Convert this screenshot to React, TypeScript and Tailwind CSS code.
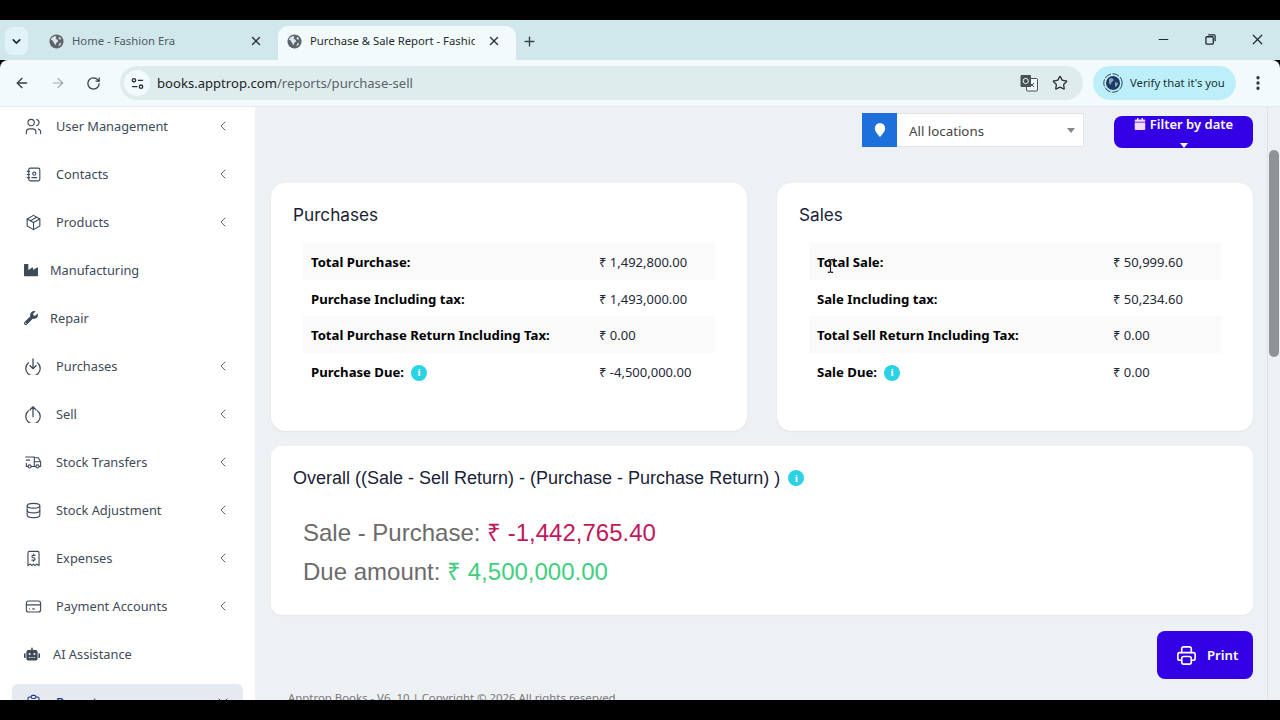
import React from "react";
import { ChevronDown, ChevronLeft, X, Plus, ArrowLeft, ArrowRight, RotateCw, Star, Minus, EllipsisVertical } from "lucide-react";
import { TbUsers, TbAddressBook, TbPackage, TbTruckDelivery, TbDatabase, TbReceipt2, TbCreditCard, TbPrinter, TbClipboardList } from "react-icons/tb";
import { FaIndustry, FaWrench, FaRobot, FaCalendar } from "react-icons/fa";

const ui = "font-['Noto_Sans','Open_Sans',sans-serif]";

function GlobeIcon() {
  return (
    <svg viewBox="0 0 16 16" className="w-[15px] h-[15px] shrink-0">
      <circle cx="8" cy="8" r="7.5" fill="#5f6368" />
      <path d="M3 4l3-2 2 1-1 2 2 1 1 2-2 1-1 3-2-3-1-2-2-1zM11 3l2 2-1 1-2-1zM11 10l2-1-1 3-2 1z" fill="#d5e9ee" />
    </svg>
  );
}

function Tab({ title, active }: { title: string; active?: boolean }) {
  return (
    <div className={`relative w-[238px] h-[34px] flex items-center pl-[9px] pr-[15px] pb-[4px] rounded-t-[10px] ${active ? "bg-[#f2fafc] text-[#1f2a2e]" : "text-[#4f5b60]"}`}>
      <GlobeIcon />
      <span className="ml-[8px] flex-1 overflow-hidden whitespace-nowrap text-[11.3px] mr-[12px]">{title}</span>
      <X size={14} strokeWidth={2.4} className="text-[#2c3438]" />
    </div>
  );
}

function Chrome() {
  return (
    <div className={`${ui} shrink-0`}>
      <div className="h-[40px] bg-[#d0e7ec] flex items-end pl-[5px]">
        <div className="w-[23px] h-[28px] mb-[5px] bg-[#e1f3f8] rounded-[8px] flex items-center justify-center mr-[12px]">
          <ChevronDown size={13} strokeWidth={3} className="text-[#1f2a2e]" />
        </div>
        <Tab title="Home - Fashion Era" />
        <Tab title="Purchase & Sale Report - Fashion Era" active />
        <Plus size={15} strokeWidth={2.2} className="ml-[6px] mb-[11px] text-[#3a4448]" />
        <div className="flex-1" />
        <div className="flex items-center mb-[12px] text-[#1f2a2e]">
          <Minus size={15} strokeWidth={1.6} />
          <svg viewBox="0 0 12 12" className="w-[11px] h-[11px] ml-[34px]" fill="none" stroke="#1f2a2e" strokeWidth="1.4"><rect x="1" y="3" width="8" height="8" rx="1" /><path d="M3.5 1h6.5a1 1 0 0 1 1 1v6" /></svg>
          <X size={17} strokeWidth={1.7} className="ml-[33px] mr-[14px]" />
        </div>
      </div>
      <div className="h-[47px] bg-[#f2fafc] flex items-center rounded-t-[8px] border-b border-[#e3edf0]">
        <ArrowLeft size={16} strokeWidth={2} className="ml-[14px] text-[#353d40]" />
        <ArrowRight size={16} strokeWidth={1.6} className="ml-[20px] text-[#9ba5a8]" />
        <RotateCw size={15} strokeWidth={2} className="ml-[20px] text-[#353d40]" />
        <div className="ml-[19px] w-[963px] h-[34px] rounded-full bg-[#dfeced] flex items-center pl-[4px]">
          <div className="w-[26px] h-[26px] bg-[#f2fafc] rounded-full flex items-center justify-center">
            <svg viewBox="0 0 14 14" className="w-[13px] h-[13px]" fill="none" stroke="#2c3438" strokeWidth="1.5">
              <circle cx="3.2" cy="3.6" r="1.8" /><path d="M7.5 3.6H13M1 10.4h6" /><circle cx="10.8" cy="10.4" r="1.8" />
            </svg>
          </div>
          <span className="ml-[7px] pt-[1px] text-[13.1px] text-[#1c2427]">books.apptrop.com<span className="text-[#5a6568]">/reports/purchase-sell</span></span>
          <div className="flex-1" />
          <svg viewBox="0 0 18 18" className="w-[18px] h-[18px] mr-[14px]">
            <rect x="6.5" y="4.5" width="11" height="12.5" rx="1" fill="#eef5f6" stroke="#4a5256" strokeWidth="1" />
            <rect x="0.5" y="1" width="10.5" height="12" rx="1" fill="#4a5256" />
            <circle cx="5.7" cy="7" r="2.6" fill="none" stroke="#eef5f6" strokeWidth="1" />
            <path d="M10 9l4 4M14 9l-4 4" stroke="#4a5256" strokeWidth="1" />
          </svg>
          <Star size={16} strokeWidth={2} className="text-[#2c3438] mr-[15px]" />
        </div>
        <div className="ml-[10px] w-[143px] h-[34px] rounded-full bg-[#bdeffb] flex items-center pl-[10px]">
          <svg viewBox="0 0 20 20" className="w-[20px] h-[20px] shrink-0">
            <circle cx="10" cy="10" r="9.2" fill="none" stroke="#2c4452" strokeWidth="1" strokeDasharray="7 1.5" />
            <circle cx="10" cy="10" r="7" fill="#1f3a63" />
            <path d="M6 6l3-1 2 2-2 2-2 3-1-2zM12 9l3 1-1 3-2 1z" fill="#8aa4b8" />
          </svg>
          <span className="ml-[7px] text-[11.3px] whitespace-nowrap text-[#1c3138]">Verify that it's you</span>
        </div>
        <EllipsisVertical size={18} strokeWidth={2.4} className="ml-[13px] text-[#2c3438]" />
      </div>
    </div>
  );
}

function ArcArrow({ up }: { up?: boolean }) {
  return (
    <svg viewBox="0 0 20 20" className="w-[18px] h-[18px]" fill="none" stroke="currentColor" strokeWidth="1.4" strokeLinecap="round" strokeLinejoin="round">
      <path d="M5 6.5a8 8 0 1 0 10 0" />
      {up ? <path d="M10 13V2M6.5 5.5L10 2l3.5 3.5" /> : <path d="M10 2v11M6.5 9.5L10 13l3.5-3.5" />}
    </svg>
  );
}

type Item = { label: string; icon: React.ReactNode; chevron?: boolean; w: string };
const tb = { size: 19, strokeWidth: 1.4 };

const items: Item[] = [
  { label: "User Management", icon: <TbUsers {...tb} />, chevron: true, w: "w-[32px]" },
  { label: "Contacts", icon: <TbAddressBook {...tb} />, chevron: true, w: "w-[32px]" },
  { label: "Products", icon: <TbPackage {...tb} />, chevron: true, w: "w-[32px]" },
  { label: "Manufacturing", icon: <FaIndustry size={14} />, w: "w-[26px]" },
  { label: "Repair", icon: <FaWrench size={14} />, w: "w-[26px]" },
  { label: "Purchases", icon: <ArcArrow />, chevron: true, w: "w-[32px]" },
  { label: "Sell", icon: <ArcArrow up />, chevron: true, w: "w-[32px]" },
  { label: "Stock Transfers", icon: <TbTruckDelivery {...tb} />, chevron: true, w: "w-[32px]" },
  { label: "Stock Adjustment", icon: <TbDatabase {...tb} />, chevron: true, w: "w-[32px]" },
  { label: "Expenses", icon: <TbReceipt2 {...tb} />, chevron: true, w: "w-[32px]" },
  { label: "Payment Accounts", icon: <TbCreditCard {...tb} />, chevron: true, w: "w-[32px]" },
  { label: "AI Assistance", icon: <FaRobot size={16} />, w: "w-[29px]" },
];

function Sidebar() {
  return (
    <div className={`${ui} w-[255px] shrink-0 bg-white overflow-hidden`}>
      <div className="-mt-[5px] px-[12px]">
        {items.map((it) => (
          <div key={it.label} className="h-[48px] flex items-center pl-[12px] pr-[12px] text-[#3d4a58]">
            <span className={`${it.w} flex shrink-0`}>{it.icon}</span>
            <span className="text-[12.8px] whitespace-nowrap pt-[2px]">{it.label}</span>
            <span className="flex-1" />
            {it.chevron && <ChevronLeft size={16} strokeWidth={1.4} className="text-[#4b5563]" />}
          </div>
        ))}
        <div className="h-[48px] bg-[#e5e9f0] rounded-[6px] flex items-start pt-[9px] pl-[12px] pr-[12px] text-[#1e3a8a] mt-[6px]">
          <span className="w-[32px] flex shrink-0"><TbClipboardList {...tb} /></span>
          <span className="text-[12.8px] font-medium">Reports</span>
          <span className="flex-1" />
          <ChevronDown size={16} strokeWidth={1.4} />
        </div>
      </div>
    </div>
  );
}

function InfoDot() {
  return (
    <span className="inline-flex w-[16px] h-[16px] rounded-full bg-[#2bd2e6] items-center justify-center text-white text-[11px] font-bold font-['Liberation_Serif',serif] leading-none">i</span>
  );
}

function ReportCard({ title, rows, valueLeft }: { title: string; rows: { k: string; v: string; info?: boolean }[]; valueLeft: number }) {
  return (
    <div className="flex-1 h-[248px] bg-white rounded-[14px] border border-white shadow-[0_1px_2px_rgba(0,0,0,0.06)] pl-[21px] pr-[31px] pt-[20px]">
      <h3 className="text-[17.2px] leading-[21px] text-[#1a2236] font-['Inter',sans-serif] font-normal">{title}</h3>
      <div className="mt-[18px] ml-[10px]">
        {rows.map((r, i) => (
          <div key={r.k} className={`h-[36.7px] flex items-center pl-[8px] pt-[3px] text-black ${i % 2 === 0 ? "bg-[#fafafa]" : ""}`}>
            <span className="font-bold text-[13.15px] flex items-center gap-[7px] whitespace-nowrap" style={{ width: valueLeft }}>{r.k}{r.info && <InfoDot />}</span>
            <span className="whitespace-nowrap text-[13px] text-[#1f2937]">{r.v}</span>
          </div>
        ))}
      </div>
    </div>
  );
}

export default function App() {
  return (
    <div className="w-[1280px] h-[720px] bg-black flex flex-col overflow-hidden pt-[20px] pb-[20px]">
      <Chrome />
      <div className="flex-1 flex min-h-0 relative">
        <Sidebar />
        <div className={`${ui} flex-1 bg-[#edf1f4] overflow-hidden pl-[16px] pr-[14px]`}>
          <div className="flex justify-end h-[76px] pt-[6px]">
            <div className="flex w-[222px] h-[34px] border border-[#e2e5e8] bg-white mr-[-1px]">
              <div className="w-[35px] bg-[#1d6fdc] flex items-center justify-center -my-px -ml-px h-[34px]">
                <svg viewBox="0 0 12 16" className="w-[12px] h-[16px]" fill="white"><path d="M6 1a5.2 5.2 0 0 0-5.2 5.2c0 3.2 3.4 6.8 5.2 8.8 1.8-2 5.2-5.6 5.2-8.8A5.2 5.2 0 0 0 6 1z" /></svg>
              </div>
              <div className="flex-1 flex items-center pl-[12px] pt-[3px] text-[13.3px] text-[#444]">All locations</div>
              <span className="w-0 h-0 mt-[14px] mr-[8px] border-x-[4px] border-x-transparent border-t-[5px] border-t-[#888]" />
            </div>
            <div className="ml-[31px] mt-[3px] w-[139px] h-[32px] rounded-[8px] bg-[#3300e6] text-white flex flex-col items-center overflow-hidden">
              <div className="flex items-center gap-[4px] text-[13px] font-semibold leading-[18px] -mt-[1px]">
                <FaCalendar size={12} className="text-[#f6d9f6]" />
                Filter by date
              </div>
              <span className="w-0 h-0 mt-[10px] border-x-[4px] border-x-transparent border-t-[5px] border-t-white" />
            </div>
          </div>
          <div className="flex gap-[30px]">
            <ReportCard title="Purchases" valueLeft={288} rows={[
              { k: "Total Purchase:", v: "₹ 1,492,800.00" },
              { k: "Purchase Including tax:", v: "₹ 1,493,000.00" },
              { k: "Total Purchase Return Including Tax:", v: "₹ 0.00" },
              { k: "Purchase Due:", v: "₹ -4,500,000.00", info: true },
            ]} />
            <ReportCard title="Sales" valueLeft={296} rows={[
              { k: "Total Sale:", v: "₹ 50,999.60" },
              { k: "Sale Including tax:", v: "₹ 50,234.60" },
              { k: "Total Sell Return Including Tax:", v: "₹ 0.00" },
              { k: "Sale Due:", v: "₹ 0.00", info: true },
            ]} />
          </div>
          <div className="mt-[15px] h-[169px] bg-white rounded-[10px] border border-white shadow-[0_1px_2px_rgba(0,0,0,0.04)] pl-[21px] pt-[19px] font-['Liberation_Sans',sans-serif]">
            <div className="flex items-center gap-[8px] text-[18px] leading-[24px] text-[#1a2236]">
              <span>Overall ((Sale - Sell Return) - (Purchase - Purchase Return) )</span>
              <InfoDot />
            </div>
            <div className="mt-[22.5px] ml-[10px] text-[24px] leading-[39px] text-[#6b6b6b]">
              <div>Sale - Purchase: <span className="text-[#c2185b]">₹ -1,442,765.40</span></div>
              <div>Due amount: <span className="text-[#3ecf7e]">₹ 4,500,000.00</span></div>
            </div>
          </div>
          <div className="flex justify-end mt-[16px]">
            <div className="w-[96px] h-[48px] rounded-[8px] bg-[#3300e6] text-white flex items-center pl-[18px] gap-[9px] text-[13.2px] font-semibold">
              <TbPrinter size={23} strokeWidth={1.7} />
              <span className="pt-[2px]">Print</span>
            </div>
          </div>
          <div className="mt-[11px] ml-[17px] text-[11.4px] leading-[16px] text-[#777] whitespace-nowrap">Apptrop Books - V6. 10 | Copyright © 2026 All rights reserved.</div>
        </div>
        <div className="w-[13px] shrink-0 bg-[#eef1f3] border-l border-[#dfe3e6] flex flex-col">
          <div className="h-[43px]" />
          <div className="h-[207px] bg-[#8f9396] rounded-full mx-[1px]" />
        </div>
        <svg viewBox="0 0 10 16" className="absolute left-[826px] top-[151px] w-[9px] h-[16px]" fill="none" stroke="#222" strokeWidth="1.3"><path d="M2 1h2l1 1 1-1h2M5 2v12M2 15h2l1-1 1 1h2" /></svg>
      </div>
    </div>
  );
}
